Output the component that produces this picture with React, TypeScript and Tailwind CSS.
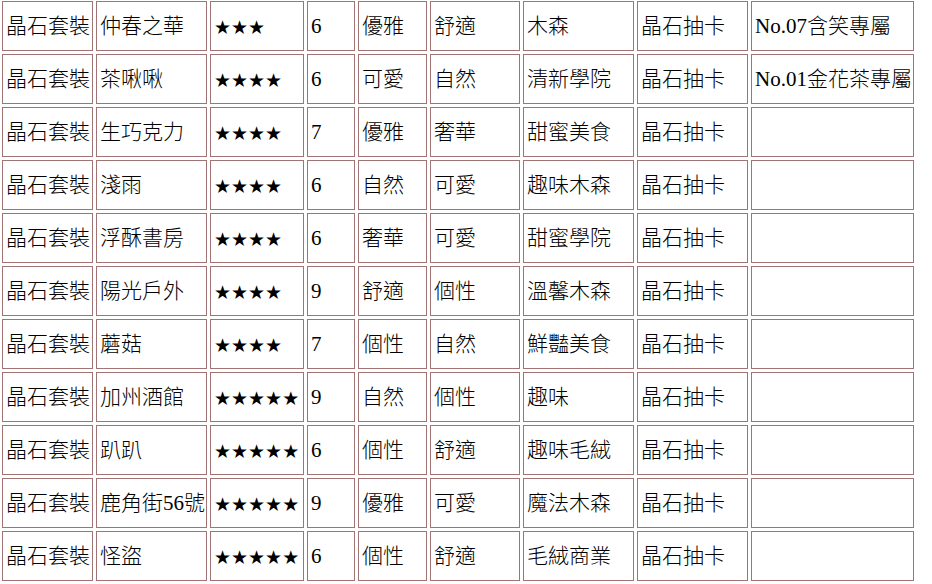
import React from 'react'

type Row = [string, string, string, string, string, string, string, string, string]

const rows: Row[] = [
  ['晶石套裝', '仲春之華', '★★★', '6', '優雅', '舒適', '木森', '晶石抽卡', 'No.07含笑專屬'],
  ['晶石套裝', '茶啾啾', '★★★★', '6', '可愛', '自然', '清新學院', '晶石抽卡', 'No.01金花茶專屬'],
  ['晶石套裝', '生巧克力', '★★★★', '7', '優雅', '奢華', '甜蜜美食', '晶石抽卡', ''],
  ['晶石套裝', '淺雨', '★★★★', '6', '自然', '可愛', '趣味木森', '晶石抽卡', ''],
  ['晶石套裝', '浮酥書房', '★★★★', '6', '奢華', '可愛', '甜蜜學院', '晶石抽卡', ''],
  ['晶石套裝', '陽光戶外', '★★★★', '9', '舒適', '個性', '溫馨木森', '晶石抽卡', ''],
  ['晶石套裝', '蘑菇', '★★★★', '7', '個性', '自然', '鮮豔美食', '晶石抽卡', ''],
  ['晶石套裝', '加州酒館', '★★★★★', '9', '自然', '個性', '趣味', '晶石抽卡', ''],
  ['晶石套裝', '趴趴', '★★★★★', '6', '個性', '舒適', '趣味毛絨', '晶石抽卡', ''],
  ['晶石套裝', '鹿角街56號', '★★★★★', '9', '優雅', '可愛', '魔法木森', '晶石抽卡', ''],
  ['晶石套裝', '怪盜', '★★★★★', '6', '個性', '舒適', '毛絨商業', '晶石抽卡', ''],
]

export default function App() {
  return (
    <div className="w-[932px] h-[584px] bg-white overflow-hidden pl-[2px] pt-[1px] font-['Liberation_Serif','Noto_Sans_CJK_TC',serif] text-[21px] text-black">
      <div className="grid grid-cols-[91px_111px_94px_48px_69px_90px_111px_111px_163px] auto-rows-[50px] gap-[3px]">
        {rows.map((row, i) =>
          row.map((cell, j) => (
            <div
              key={i + '-' + j}
              className={
                'flex items-center border border-[#a07474] pl-[3px] pt-[2px] whitespace-nowrap overflow-hidden ' +
                (j === 2 ? "font-['DejaVu_Sans',sans-serif] text-[19px]" : 'font-light')
              }
            >
              {cell}
            </div>
          ))
        )}
      </div>
    </div>
  )
}
